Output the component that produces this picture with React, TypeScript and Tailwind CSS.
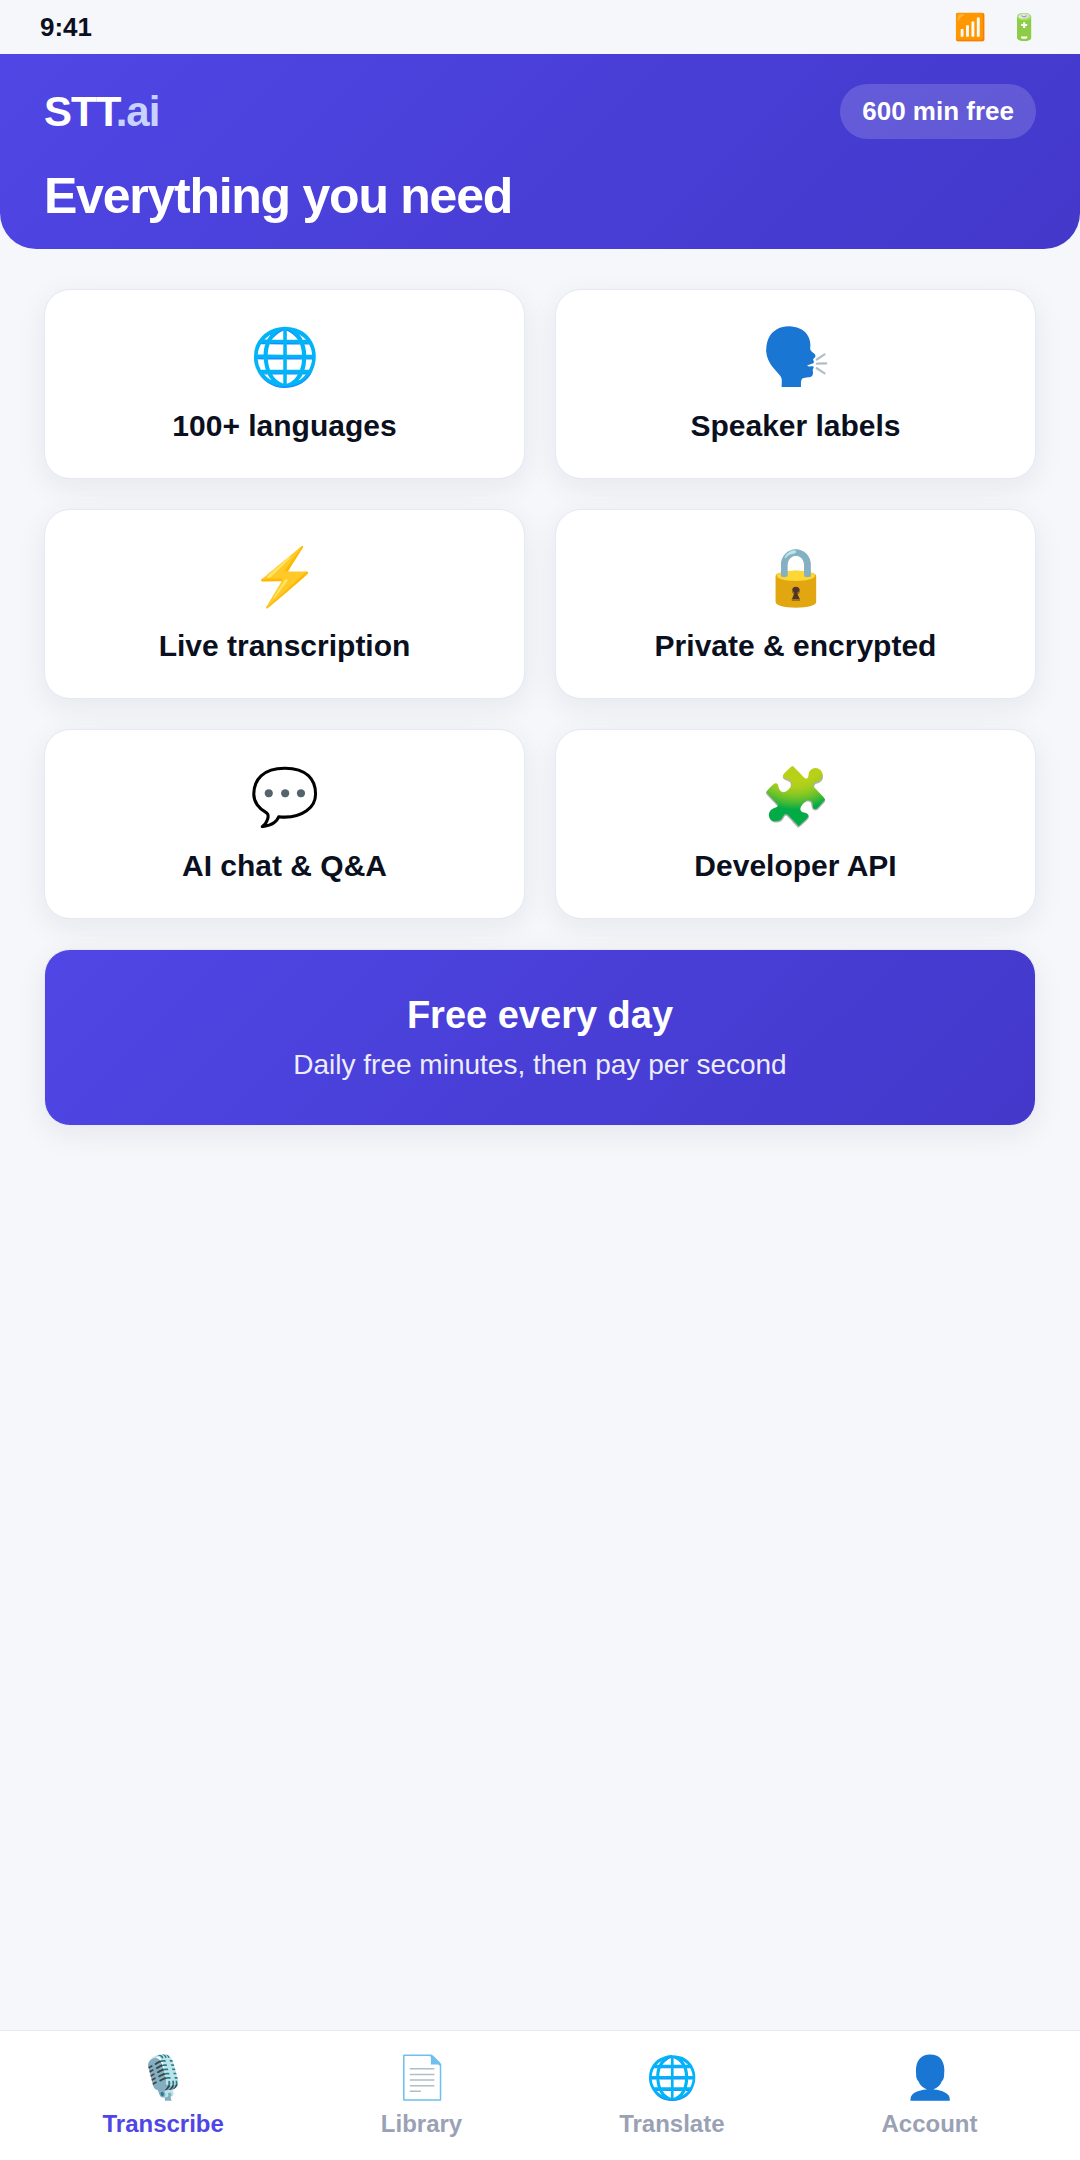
import React from 'react';

const features = [
  { icon: '🌐', label: '100+ languages' },
  { icon: '🗣️', label: 'Speaker labels' },
  { icon: '⚡', label: 'Live transcription' },
  { icon: '🔒', label: 'Private & encrypted' },
  { icon: '💬', label: 'AI chat & Q&A' },
  { icon: '🧩', label: 'Developer API' },
];

const tabs = [
  { icon: '🎙️', label: 'Transcribe', active: true },
  { icon: '📄', label: 'Library', active: false },
  { icon: '🌐', label: 'Translate', active: false },
  { icon: '👤', label: 'Account', active: false },
];

const StatusBar = () => (
  <div className="flex h-[54px] items-center justify-between px-10 text-[26px] font-bold">
    <span>9:41</span>
    <span className="flex gap-[22px]">
      <span>📶</span>
      <span>🔋</span>
    </span>
  </div>
);

const Header = () => (
  <header className="rounded-b-[36px] bg-linear-135 from-[#4f46e5] to-[#4338ca] px-11 pt-[30px] pb-6 text-white">
    <div className="flex items-center justify-between">
      <a href="#" className="text-[42px] leading-[48px] font-bold tracking-[-1px]">
        STT<span className="text-[#c7d2fe]">.ai</span>
      </a>
      <span className="rounded-full bg-white/[0.16] px-[22px] py-3 text-[26px] leading-[31px] font-bold">
        600 min free
      </span>
    </div>
    <h1 className="mt-7 text-[50px] leading-[58px] font-bold tracking-tight">
      Everything you need
    </h1>
  </header>
);

const App = () => {
  return (
    <div className="flex min-h-screen flex-col bg-[#f6f7fb] font-['Liberation_Sans',sans-serif] text-[#0b1020]">
      <StatusBar />
      <Header />
      <main className="flex flex-1 flex-col gap-[30px] px-11 pt-10">
        <ul className="grid grid-cols-2 gap-[30px]">
          {features.map((feature) => (
            <li
              key={feature.label}
              className="flex flex-col items-center rounded-[26px] border border-[#e6e8f4] bg-white py-[34px] shadow-[0_8px_30px_rgba(16,24,40,0.07)]"
            >
              <span className="text-[56px] leading-[66px]">{feature.icon}</span>
              <span className="mt-[18px] text-[30px] leading-9 font-bold">{feature.label}</span>
            </li>
          ))}
        </ul>
        <section className="rounded-[26px] border border-[#e6e8f4] bg-linear-135 from-[#4f46e5] to-[#4338ca] py-[42px] text-center text-white shadow-[0_8px_30px_rgba(16,24,40,0.07)]">
          <h2 className="text-[38px] leading-[47px] font-bold">Free every day</h2>
          <p className="mt-2 text-[28px] leading-9 opacity-90">
            Daily free minutes, then pay per second
          </p>
        </section>
      </main>
      <nav className="flex justify-around border-t border-[#e6e8f4] bg-white px-6 pt-[22px] pb-[21px]">
        {tabs.map((tab) => (
          <a
            key={tab.label}
            href="#"
            className={`flex flex-col items-center gap-1.5 text-2xl leading-[30px] font-bold ${tab.active ? 'text-[#4f46e5]' : 'text-[#9aa1b5]'}`}
          >
            <span className="text-[42px] leading-[50px]">{tab.icon}</span>
            {tab.label}
          </a>
        ))}
      </nav>
    </div>
  );
};

export default App;
